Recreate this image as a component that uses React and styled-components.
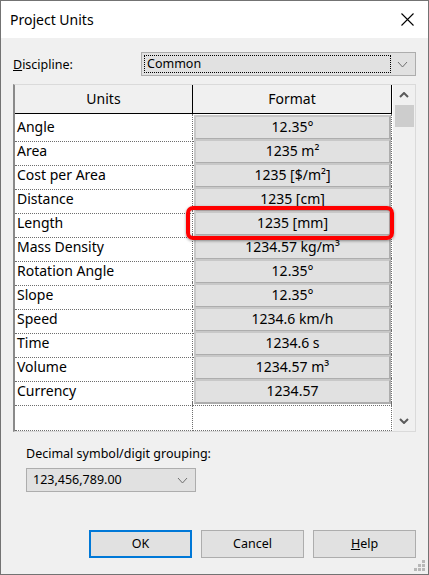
import React from 'react';
import styled, { createGlobalStyle } from 'styled-components';

const GlobalStyle = createGlobalStyle`
    * { box-sizing: border-box; }
    body {
        margin: 0;
        background: #ffffff;
        font-family: 'Noto Sans', 'Open Sans', sans-serif;
    }
`;

const Window = styled.div`
    position: relative;
    width: 429px;
    height: 575px;
    border: 1px solid #737373;
    background: #f0f0f0;
    display: flex;
    flex-direction: column;
`;

const TitleBar = styled.div`
    height: 37px;
    background: #ffffff;
    display: flex;
    align-items: center;
    justify-content: space-between;
    padding: 0 14px 0 9px;
`;

const Title = styled.div`
    font-size: 14px;
    color: #000000;
`;

const Body = styled.div`
    flex: 1;
    display: flex;
    flex-direction: column;
    padding: 14px 12px 0 12px;
`;

const FieldRow = styled.div`
    display: flex;
    align-items: center;
    height: 24px;
`;

const Label = styled.div`
    width: ${props => props.width || 'auto'};
    font-size: 12.5px;
    color: #000000;
    padding-left: ${props => props.indent || 0}px;
`;

const Combo = styled.div`
    width: ${props => props.width};
    height: 24px;
    background: #e1e1e1;
    border: 1px solid #adadad;
    display: flex;
    align-items: center;
    padding: 2px;
    font-size: 12.5px;
    color: #000000;
`;

const ComboText = styled.div`
    flex: 1;
    height: 100%;
    display: flex;
    align-items: center;
    padding-left: ${props => props.pad || 2}px;
    padding-bottom: 1px;
    border: 1px dotted ${props => (props.focused ? '#000000' : 'transparent')};
`;

const ComboArrow = styled.div`
    width: 22px;
    display: flex;
    justify-content: center;
`;

const Grid = styled.div`
    margin-top: 8px;
    height: 348px;
    display: flex;
    gap: 1px;
    background: #ffffff;
    border: 1px solid #dadada;
    border-left: 2px solid #8a8a8a;
`;

const Columns = styled.div`
    width: 377px;
    display: flex;
    flex-direction: column;
`;

const HeaderRow = styled.div`
    display: grid;
    grid-template-columns: 178px 199px;
    height: 29px;
    background: #f0f0f0;
    border-bottom: 1px solid #000000;
`;

const HeaderCell = styled.div`
    display: flex;
    align-items: center;
    justify-content: center;
    padding-bottom: 2px;
    border-right: 1px solid #000000;
    font-size: 14px;
    color: #000000;
`;

const Row = styled.div`
    display: grid;
    grid-template-columns: 178px 199px;
    height: ${props => props.height || 24}px;
`;

const UnitCell = styled.div`
    display: flex;
    align-items: center;
    padding: 0 0 3px 2px;
    border-right: 1px dotted #6e6e6e;
    border-bottom: 1px dotted #6e6e6e;
    font-size: 14px;
    color: #000000;
`;

const FormatCell = styled.div`
    position: relative;
    display: flex;
    border-right: 1px dotted #6e6e6e;
    border-bottom: 1px dotted #6e6e6e;
    padding: 1px 0 1px 1px;
`;

const FormatBox = styled.div`
    flex: 1;
    display: flex;
    align-items: center;
    justify-content: center;
    padding-bottom: 2px;
    background: #e1e1e1;
    border: 2px solid #adadad;
    border-top-color: #c8c8c8;
    border-left-color: #c8c8c8;
    font-size: 14px;
    color: #000000;
`;

const Highlight = styled.div`
    position: absolute;
    z-index: 2;
    top: -4px;
    left: -7px;
    right: -3px;
    bottom: -3px;
    border: 4px solid #ff0000;
    border-radius: 7px;
    box-shadow: 0 1px 3px rgba(0, 0, 0, 0.4), inset 0 0 2px rgba(120, 0, 0, 0.35);
    pointer-events: none;
`;

const Scrollbar = styled.div`
    width: 22px;
    background: #f0f0f0;
    display: flex;
    flex-direction: column;
    align-items: center;
`;

const ScrollButton = styled.div`
    width: 100%;
    height: 20px;
    display: flex;
    align-items: center;
    justify-content: center;
`;

const Thumb = styled.div`
    width: 19px;
    height: 22px;
    background: #cdcdcd;
`;

const Track = styled.div`
    flex: 1;
`;

const DecimalLabel = styled(Label)`
    margin-top: 13px;
    line-height: 17px;
`;

const DecimalRow = styled(FieldRow)`
    margin-top: 6px;
    padding-left: 13px;
`;

const ButtonRow = styled.div`
    margin-top: 38px;
    display: flex;
    justify-content: flex-end;
    gap: 9px;
`;

const Button = styled.div`
    width: 103px;
    height: 28px;
    display: flex;
    align-items: center;
    justify-content: center;
    padding-bottom: 1px;
    background: #e1e1e1;
    border: ${props => (props.primary ? '2px solid #0078d7' : '1px solid #adadad')};
    font-size: 12.5px;
    color: #000000;
`;

const Grip = styled.svg`
    position: absolute;
    right: 2px;
    bottom: 2px;
`;

const Chevron = ({ up, color = '#606060', w = 9, h = 5, sw = 1 }) => (
    <svg width={w + 2} height={h + 2} viewBox={`-1 -1 ${w + 2} ${h + 2}`}>
        <polyline
            points={up ? `0,${h} ${w / 2},0 ${w},${h}` : `0,0 ${w / 2},${h} ${w},0`}
            fill="none"
            stroke={color}
            strokeWidth={sw}
        />
    </svg>
);

const units = [
    ['Angle', '12.35°'],
    ['Area', '1235 m²'],
    ['Cost per Area', '1235 [$/m²]'],
    ['Distance', '1235 [cm]'],
    ['Length', '1235 [mm]'],
    ['Mass Density', '1234.57 kg/m³'],
    ['Rotation Angle', '12.35°'],
    ['Slope', '12.35°'],
    ['Speed', '1234.6 km/h'],
    ['Time', '1234.6 s'],
    ['Volume', '1234.57 m³'],
    ['Currency', '1234.57'],
];

export default function App() {
    return (
        <>
            <GlobalStyle />
            <Window>
                <TitleBar>
                    <Title>Project Units</Title>
                    <svg width="13" height="13" viewBox="0 0 13 13">
                        <path d="M0.5 0.5 L12.5 12.5 M12.5 0.5 L0.5 12.5" stroke="#000" strokeWidth="1.1" />
                    </svg>
                </TitleBar>
                <Body>
                    <FieldRow>
                        <Label width="128px">
                            <u>D</u>iscipline:
                        </Label>
                        <Combo width="275px">
                            <ComboText focused>Common</ComboText>
                            <ComboArrow>
                                <Chevron color="#707070" w={9} h={5} />
                            </ComboArrow>
                        </Combo>
                    </FieldRow>

                    <Grid>
                        <Columns>
                            <HeaderRow>
                                <HeaderCell>Units</HeaderCell>
                                <HeaderCell>Format</HeaderCell>
                            </HeaderRow>
                            {units.map(([name, value]) => (
                                <Row key={name}>
                                    <UnitCell>{name}</UnitCell>
                                    <FormatCell>
                                        <FormatBox>{value}</FormatBox>
                                        {name === 'Length' && <Highlight />}
                                    </FormatCell>
                                </Row>
                            ))}
                            <Row height={29}>
                                <UnitCell />
                                <FormatCell />
                            </Row>
                        </Columns>
                        <Scrollbar>
                            <ScrollButton>
                                <Chevron up color="#5a5a5a" w={8} h={4} sw={2} />
                            </ScrollButton>
                            <Thumb />
                            <Track />
                            <ScrollButton>
                                <Chevron color="#5a5a5a" w={8} h={4} sw={2} />
                            </ScrollButton>
                        </Scrollbar>
                    </Grid>

                    <DecimalLabel indent={13}>
                        Decimal symbol/digit <u>g</u>rouping:
                    </DecimalLabel>
                    <DecimalRow>
                        <Combo width="170px">
                            <ComboText pad={3}>123,456,789.00</ComboText>
                            <ComboArrow>
                                <Chevron color="#707070" w={9} h={5} />
                            </ComboArrow>
                        </Combo>
                    </DecimalRow>

                    <ButtonRow>
                        <Button primary>OK</Button>
                        <Button>Cancel</Button>
                        <Button>
                            <span>
                                <u>H</u>elp
                            </span>
                        </Button>
                    </ButtonRow>
                </Body>
                <Grip width="12" height="12" viewBox="0 0 12 12">
                    <g fill="#b8b8b8">
                        <rect x="8" y="0" width="3" height="3" />
                        <rect x="4" y="4" width="3" height="3" />
                        <rect x="8" y="4" width="3" height="3" />
                        <rect x="0" y="8" width="3" height="3" />
                        <rect x="4" y="8" width="3" height="3" />
                        <rect x="8" y="8" width="3" height="3" />
                    </g>
                </Grip>
            </Window>
        </>
    );
}
